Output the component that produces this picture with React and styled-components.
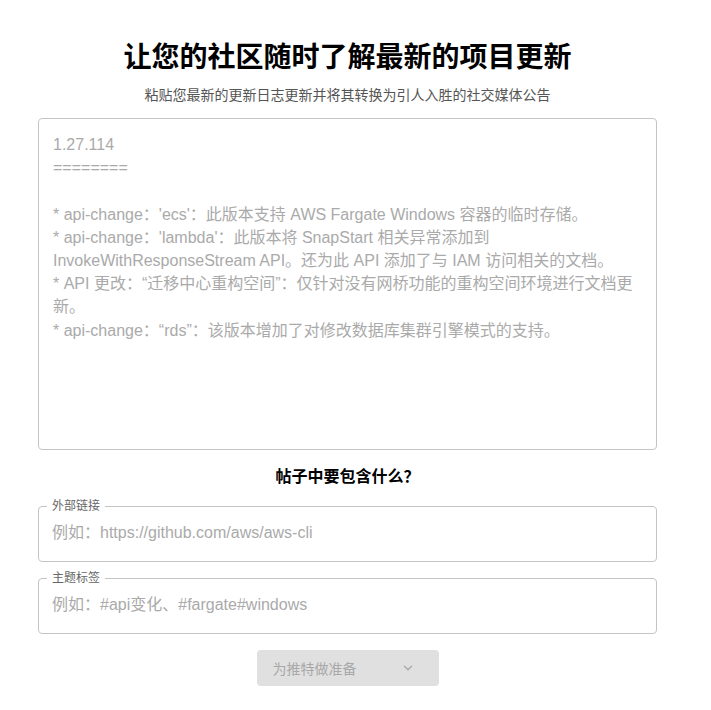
import React from 'react'
import styled, { createGlobalStyle } from 'styled-components'

const GlobalStyle = createGlobalStyle`
  body {
    margin: 0;
    background: #fff;
    font-family: "Liberation Sans", Arial, "Noto Sans CJK SC", sans-serif;
  }
`

const Page = styled.main`
  width: 619px;
  margin-left: 38px;
  padding-top: 38px;
  display: flex;
  flex-direction: column;
  align-items: stretch;
`

const Title = styled.h1`
  margin: 0;
  font-size: 28px;
  line-height: 40px;
  font-weight: 700;
  color: #000;
  text-align: center;
`

const Subtitle = styled.p`
  margin: 7px 0 0;
  font-size: 14px;
  line-height: 20px;
  color: #555;
  text-align: center;
`

const ChangelogBox = styled.textarea`
  box-sizing: border-box;
  margin-top: 13px;
  width: 100%;
  height: 332px;
  padding: 14px 14px;
  border: 1px solid #c4c4c4;
  border-radius: 4px;
  resize: none;
  outline: none;
  font-family: inherit;
  font-size: 16px;
  line-height: 23.2px;
  color: #333;

  &::placeholder {
    color: #aaa;
    opacity: 1;
  }
`

const SectionTitle = styled.h2`
  margin: 17px 0 0;
  font-size: 16px;
  line-height: 20px;
  font-weight: 700;
  text-align: center;
  color: #000;
`

const Field = styled.fieldset`
  box-sizing: border-box;
  margin: ${({ first }) => (first ? '12px' : '9px')} 0 0;
  padding: 0 13px;
  border: 1px solid #c4c4c4;
  border-radius: 4px;
  min-width: 0;
`

const Legend = styled.legend`
  padding: 0 5px;
  margin-left: -5px;
  font-size: 12px;
  line-height: 14px;
  color: #666;
`

const Input = styled.input`
  display: block;
  box-sizing: content-box;
  width: 100%;
  height: 22px;
  border: none;
  outline: none;
  padding: 9px 0 17px;
  margin: 0;
  font-family: inherit;
  font-size: 16px;
  line-height: 22px;
  color: #333;
  background: transparent;

  &::placeholder {
    color: #aaa;
    opacity: 1;
  }
`

const Actions = styled.div`
  display: flex;
  justify-content: center;
  margin-top: 16px;
`

const TweetButton = styled.button`
  width: 182px;
  height: 36px;
  border: none;
  border-radius: 4px;
  background: #e0e0e0;
  display: flex;
  align-items: center;
  justify-content: space-between;
  padding: 0 24px 0 16px;
  font-family: inherit;
  font-size: 14px;
  color: #a8a8a8;
  cursor: default;
`

const Chevron = () => (
  <svg width="14" height="14" viewBox="0 0 24 24" fill="none" stroke="#a8a8a8" strokeWidth="2.4" strokeLinecap="round" strokeLinejoin="round">
    <polyline points="6 9 12 15 18 9" />
  </svg>
)

const changelog = [
  '1.27.114',
  '========',
  '',
  "* api-change：'ecs'：此版本支持 AWS Fargate Windows 容器的临时存储。",
  "* api-change：'lambda'：此版本将 SnapStart 相关异常添加到 InvokeWithResponseStream API。还为此 API 添加了与 IAM 访问相关的文档。",
  '* API 更改：“迁移中心重构空间”：仅针对没有网桥功能的重构空间环境进行文档更新。',
  '* api-change：“rds”：该版本增加了对修改数据库集群引擎模式的支持。',
].join('\n')

export default function App() {
  return (
    <>
      <GlobalStyle />
      <Page>
        <Title>让您的社区随时了解最新的项目更新</Title>
        <Subtitle>粘贴您最新的更新日志更新并将其转换为引人入胜的社交媒体公告</Subtitle>
        <ChangelogBox placeholder={changelog} />
        <SectionTitle>帖子中要包含什么？</SectionTitle>
        <Field first>
          <Legend>外部链接</Legend>
          <Input placeholder="例如：https://github.com/aws/aws-cli" />
        </Field>
        <Field>
          <Legend>主题标签</Legend>
          <Input placeholder="例如：#api变化、#fargate#windows" />
        </Field>
        <Actions>
          <TweetButton disabled>
            为推特做准备
            <Chevron />
          </TweetButton>
        </Actions>
      </Page>
    </>
  )
}
